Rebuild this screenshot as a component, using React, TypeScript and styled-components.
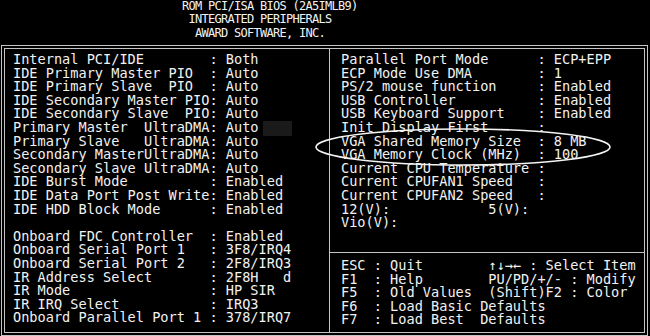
import React from 'react';
import styled, { createGlobalStyle } from 'styled-components';

const GlobalStyle = createGlobalStyle`
  html, body {
    margin: 0;
    padding: 0;
    background: #000;
  }
  body {
    width: 650px;
    height: 336px;
    overflow: hidden;
  }
`;

const LINE = '#c4c4c4';

const Screen = styled.div`
  position: relative;
  width: 650px;
  height: 336px;
  background: #000;
  color: #f2f2f2;
  font-family: "DejaVu Sans Mono", "Liberation Mono", monospace;
  overflow: hidden;
`;

const Header = styled.div`
  height: 45px;
  padding-left: 182px;
  box-sizing: border-box;
  font-size: 12px;
  line-height: 13.3px;
  letter-spacing: -0.72px;
`;

const HeaderLine = styled.div<{ $indent: number }>`
  padding-left: ${p => p.$indent}px;
  white-space: pre;
`;

const Frame = styled.div`
  margin-left: 1px;
  width: 647px;
  height: 291px;
  box-sizing: border-box;
  border: 1px solid ${LINE};
  padding: 2px;
`;

const Inner = styled.div`
  height: 100%;
  box-sizing: border-box;
  border: 1px solid ${LINE};
  display: flex;
`;

const LeftPanel = styled.div`
  width: 325px;
  box-sizing: border-box;
  border-right: 1px solid ${LINE};
  padding: 4px 0 0 8px;
`;

const RightPanel = styled.div`
  flex: 1;
  display: flex;
  flex-direction: column;
`;

const Status = styled.div`
  flex: 1;
  padding: 4px 0 0 11px;
`;

const Help = styled.div`
  border-top: 1px solid ${LINE};
  padding: 6px 0 5px 11px;
`;

const Row = styled.div`
  height: 13.6px;
  font-size: 13.6px;
  line-height: 13.6px;
  white-space: pre;
`;

const Label = styled.span`
  display: inline-block;
  width: 24ch;
`;

const Shade = styled.span`
  display: inline-block;
  width: 29px;
  height: 15px;
  margin-left: 4px;
  vertical-align: -4px;
  background: #1a1a1a;
`;

const Overlay = styled.svg`
  position: absolute;
  left: 0;
  top: 0;
  pointer-events: none;
`;

type Setting = { label: string; value?: string; shade?: boolean } | null;

const left: Setting[] = [
  { label: 'Internal PCI/IDE', value: 'Both' },
  { label: 'IDE Primary Master PIO', value: 'Auto' },
  { label: 'IDE Primary Slave  PIO', value: 'Auto' },
  { label: 'IDE Secondary Master PIO', value: 'Auto' },
  { label: 'IDE Secondary Slave  PIO', value: 'Auto' },
  { label: 'Primary Master  UltraDMA', value: 'Auto', shade: true },
  { label: 'Primary Slave   UltraDMA', value: 'Auto' },
  { label: 'Secondary MasterUltraDMA', value: 'Auto' },
  { label: 'Secondary Slave UltraDMA', value: 'Auto' },
  { label: 'IDE Burst Mode', value: 'Enabled' },
  { label: 'IDE Data Port Post Write', value: 'Enabled' },
  { label: 'IDE HDD Block Mode', value: 'Enabled' },
  null,
  { label: 'Onboard FDC Controller', value: 'Enabled' },
  { label: 'Onboard Serial Port 1', value: '3F8/IRQ4' },
  { label: 'Onboard Serial Port 2', value: '2F8/IRQ3' },
  { label: 'IR Address Select', value: '2F8H   d' },
  { label: 'IR Mode', value: 'HP SIR' },
  { label: 'IR IRQ Select', value: 'IRQ3' },
  { label: 'Onboard Parallel Port 1', value: '378/IRQ7' },
];

const right: Setting[] = [
  { label: 'Parallel Port Mode', value: 'ECP+EPP' },
  { label: 'ECP Mode Use DMA', value: '1' },
  { label: 'PS/2 mouse function', value: 'Enabled' },
  { label: 'USB Controller', value: 'Enabled' },
  { label: 'USB Keyboard Support', value: 'Enabled' },
  { label: 'Init Display First', value: '' },
  { label: 'VGA Shared Memory Size', value: '8 MB' },
  { label: 'VGA Memory Clock (MHz)', value: '100' },
  { label: 'Current CPU Temperature', value: '' },
  { label: 'Current CPUFAN1 Speed', value: '' },
  { label: 'Current CPUFAN2 Speed', value: '' },
];

const help = [
  'ESC : Quit        \u2191\u2193\u2192\u2190 : Select Item',
  'F1  : Help        PU/PD/+/- : Modify',
  'F5  : Old Values  (Shift)F2 : Color',
  'F6  : Load Basic Defaults',
  'F7  : Load Best  Defaults',
];

const SettingRow: React.FC<{ item: Setting }> = ({ item }) => {
  if (!item) return <Row> </Row>;
  return (
    <Row>
      <Label>{item.label}</Label>
      {': ' + (item.value ?? '')}
      {item.shade && <Shade />}
    </Row>
  );
};

const App: React.FC = () => {
  return (
    <Screen>
      <GlobalStyle />
      <Header>
        <HeaderLine $indent={0}>ROM PCI/ISA BIOS (2A5IMLB9)</HeaderLine>
        <HeaderLine $indent={6.5}>INTEGRATED PERIPHERALS</HeaderLine>
        <HeaderLine $indent={13}>AWARD SOFTWARE, INC.</HeaderLine>
      </Header>
      <Frame>
        <Inner>
          <LeftPanel>
            {left.map((item, i) => (
              <SettingRow key={i} item={item} />
            ))}
          </LeftPanel>
          <RightPanel>
            <Status>
              {right.map((item, i) => (
                <SettingRow key={i} item={item} />
              ))}
              <Row>{'12(V):            5(V):'}</Row>
              <Row>{'Vio(V):'}</Row>
            </Status>
            <Help>
              {help.map((line, i) => (
                <Row key={i}>{line}</Row>
              ))}
            </Help>
          </RightPanel>
        </Inner>
      </Frame>
      <Overlay width={650} height={336} viewBox="0 0 650 336">
        <ellipse cx={463} cy={147} rx={147} ry={18} fill="none" stroke="#f4f4f4" strokeWidth={1.6} />
      </Overlay>
    </Screen>
  );
};

export default App;
